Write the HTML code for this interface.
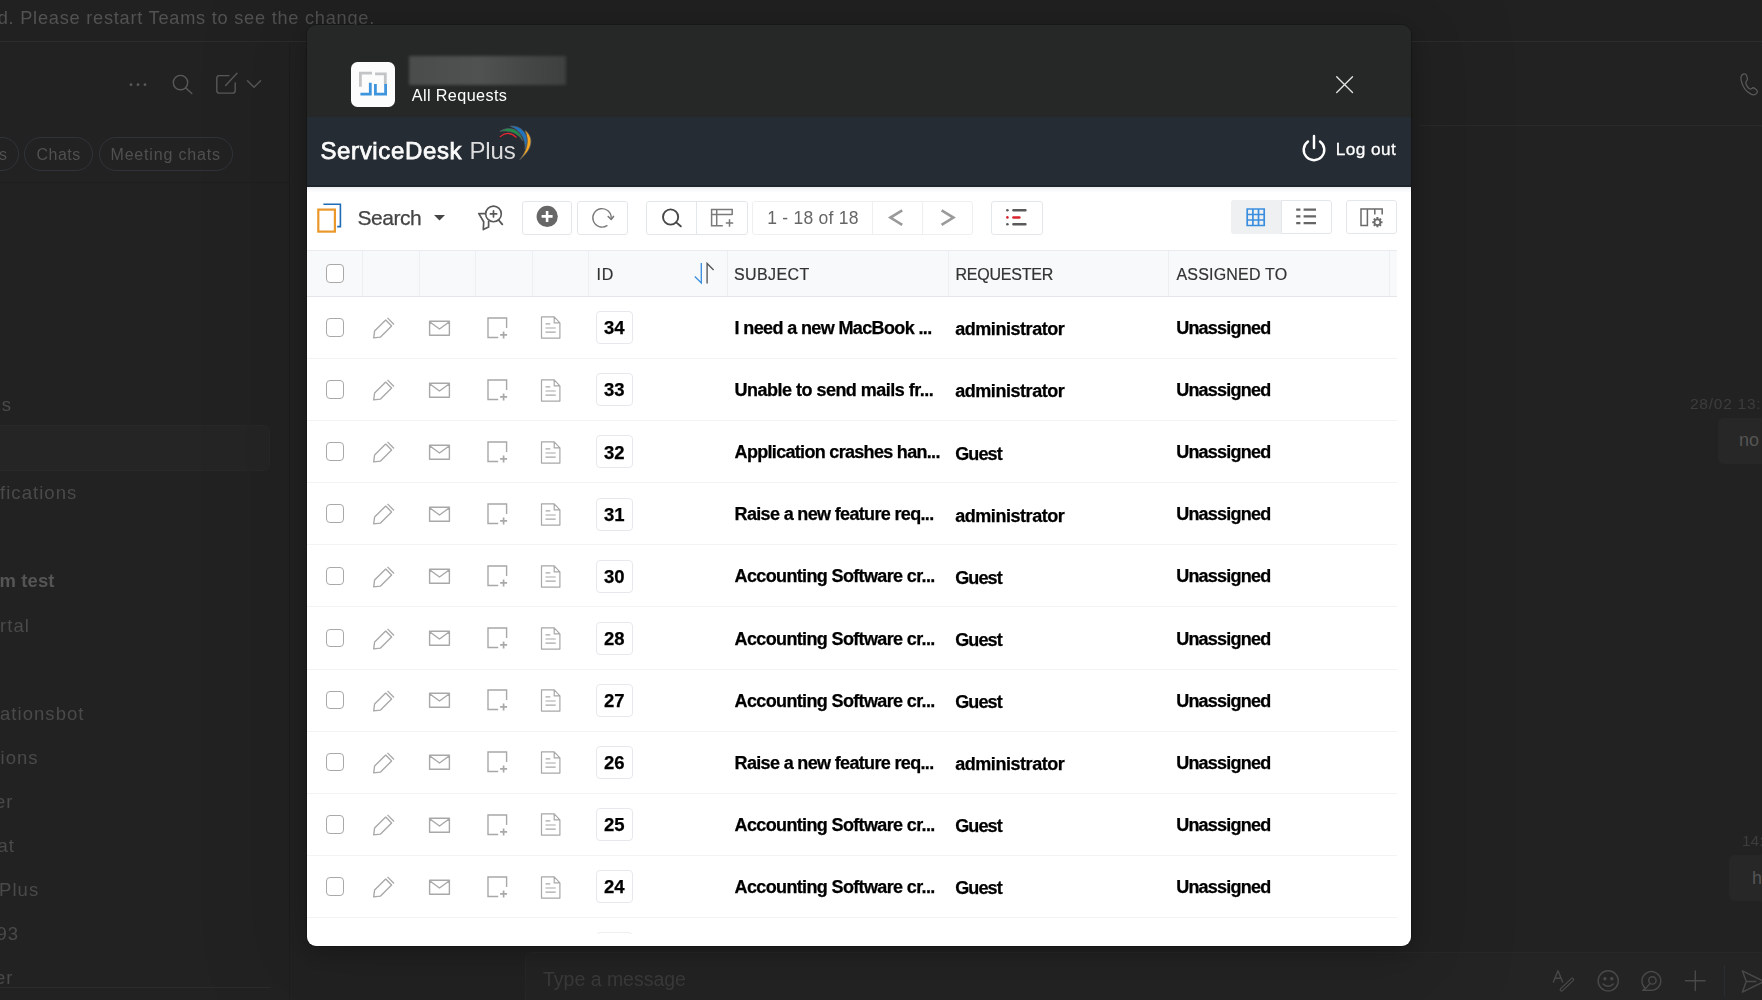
<!DOCTYPE html><html><head><meta charset="utf-8"><title>All Requests</title><style>
*{box-sizing:border-box;margin:0;padding:0}
html,body{width:1762px;height:1000px;overflow:hidden;background:#222;font-family:"Liberation Sans",sans-serif}
body{position:relative}
.t{position:absolute;white-space:nowrap;line-height:1}
.a{position:absolute}
svg{position:absolute;overflow:visible}
.btn{position:absolute;border:1px solid #e4e7ea;border-radius:3px;background:#fff}
.chip{position:absolute;border:1px solid #30343a;border-radius:17px;height:34px;top:137px}
.cb{position:absolute;width:18.4px;height:18.6px;border:1px solid #a9a9a9;border-radius:4px;background:#fff}
.idb{position:absolute;left:596px;width:36.7px;height:33px;border:1px solid #e6e8eb;border-radius:4px}
.sep{position:absolute;left:307px;width:1090px;height:1px;background:#f3f3f3}
.vl{position:absolute;top:251px;height:45px;width:1px;background:#eceef1}
</style></head><body><div id="root" style="position:absolute;left:0;top:0;width:1762px;height:1000px;transform:translateZ(0)">
<div class="a" style="left:0;top:0;width:1762px;height:42px;background:#212121;border-bottom:1px solid #2b2d2e"></div>
<div class="t" style="left:-2.3px;top:9px;font-size:18.2px;color:#525252;letter-spacing:0.76px;">d. Please restart Teams to see the change.</div>
<div class="a" style="left:0;top:126px;width:242px;height:874px;background:#222"></div>
<div class="a" style="left:1420px;top:125px;width:342px;height:1px;background:#2a2a2a"></div>
<div class="a" style="left:0;top:182px;width:289px;height:1px;background:#1e1e1e"></div><div class="a" style="left:289px;top:42px;width:1px;height:958px;background:#1e1e1e"></div>
<svg style="left:0;top:0" width="300" height="120" viewBox="0 0 300 120" fill="none" stroke="#595959" stroke-width="1.4" stroke-linecap="round" stroke-linejoin="round">
<circle cx="131" cy="84.7" r="1.4" fill="#595959" stroke="none"/><circle cx="138" cy="84.7" r="1.4" fill="#595959" stroke="none"/><circle cx="145" cy="84.7" r="1.4" fill="#595959" stroke="none"/>
<circle cx="180.5" cy="82.6" r="7.2"/><path d="M185.8 87.9 L191.8 93.5"/>
<path d="M229 75.6 H219.5 Q216.8 75.6 216.8 78.3 V90.4 Q216.8 93.1 219.5 93.1 H232.5 Q235.2 93.1 235.2 90.4 V83"/><path d="M225.6 85.5 L237 73.3"/>
<path d="M247.5 80.8 L254 87.2 L260.6 80.8"/>
</svg>
<div class="chip" style="left:-30px;width:48.5px"></div>
<div class="chip" style="left:24.3px;width:69px"></div>
<div class="chip" style="left:99px;width:134px"></div>
<div class="t" style="left:-1.0px;top:147px;font-size:16px;color:#505050;">s</div>
<div class="t" style="left:36.5px;top:147px;font-size:16px;color:#505050;letter-spacing:0.50px;">Chats</div>
<div class="t" style="left:110.5px;top:147px;font-size:16px;color:#505050;letter-spacing:0.82px;">Meeting chats</div>
<div class="a" style="left:-10px;top:425px;width:280px;height:46px;background:#252525;border:1px solid #282828;border-radius:6px"></div>
<div class="t" style="left:-9.5px;top:396px;font-size:18.5px;color:#4a4a4a;letter-spacing:1.05px;">ns</div>
<div class="t" style="left:0.0px;top:484px;font-size:18.5px;color:#4a4a4a;letter-spacing:1.05px;">fications</div>
<div class="t" style="left:-0.5px;top:572px;font-size:18.5px;color:#555;font-weight:bold;letter-spacing:0.10px;">m test</div>
<div class="t" style="left:0.0px;top:617px;font-size:18.5px;color:#4a4a4a;letter-spacing:1.05px;">rtal</div>
<div class="t" style="left:0.0px;top:705px;font-size:18.5px;color:#4a4a4a;letter-spacing:1.05px;">ationsbot</div>
<div class="t" style="left:0.5px;top:749px;font-size:18.5px;color:#4a4a4a;letter-spacing:1.05px;">ions</div>
<div class="t" style="left:-5.0px;top:793px;font-size:18.5px;color:#4a4a4a;letter-spacing:1.05px;">er</div>
<div class="t" style="left:-2.5px;top:837px;font-size:18.5px;color:#4a4a4a;letter-spacing:1.05px;">at</div>
<div class="t" style="left:-1.0px;top:881px;font-size:18.5px;color:#4a4a4a;letter-spacing:1.05px;">Plus</div>
<div class="t" style="left:-3.5px;top:925px;font-size:18.5px;color:#4a4a4a;letter-spacing:1.05px;">93</div>
<div class="t" style="left:-5.0px;top:969px;font-size:18.5px;color:#4a4a4a;letter-spacing:1.05px;">er</div>
<div class="a" style="left:0;top:987px;width:270px;height:1px;background:#2c2c2c"></div>
<div class="a" style="left:524.6px;top:952px;width:1300px;height:60px;background:#242424;border:1px solid #282828;border-radius:6px"></div>
<div class="t" style="left:543.0px;top:970px;font-size:19.5px;color:#3c3c3c;letter-spacing:-0.01px;">Type a message</div>
<div class="t" style="left:1690.0px;top:396px;font-size:15.5px;color:#3d3d3d;letter-spacing:0.75px;">28/02 13:05</div>
<div class="a" style="left:1718px;top:418px;width:60px;height:46px;background:#272727;border-radius:6px"></div>
<div class="t" style="left:1739.0px;top:431px;font-size:18px;color:#555;">no</div>
<div class="t" style="left:1742.0px;top:833px;font-size:15.5px;color:#3d3d3d;">14:</div>
<div class="a" style="left:1729px;top:855px;width:60px;height:46px;background:#272727;border-radius:6px"></div>
<div class="t" style="left:1752.0px;top:869px;font-size:18px;color:#555;">hi</div>
<svg style="left:1736px;top:72px" width="26" height="26" viewBox="0 0 27 26" preserveAspectRatio="none" fill="none" stroke="#5a5a5a" stroke-width="1.3" stroke-linejoin="round"><path d="M7.5 2.2 C9.2 1.4 10.5 2 11 3.6 L11.8 6.4 C12.2 7.8 11.6 8.8 10.6 9.6 C9.8 10.2 9.9 11.2 10.6 12.6 C11.6 14.6 12.8 16 14 16.8 C15 17.4 15.8 17 16.4 16.4 C17.4 15.6 18.6 15.6 19.6 16.4 L21.2 17.8 C22.4 18.8 22.4 20.2 21.4 21.4 C20 23 17.8 23.2 15.6 22.2 C10.6 19.8 6.8 14.4 5.4 8.6 C4.8 5.8 5.4 3.2 7.5 2.2 Z"/></svg>
<svg style="left:1540px;top:955px" width="222" height="45" viewBox="1540 955 222 45" fill="none" stroke="#494949" stroke-width="1.4" stroke-linecap="round" stroke-linejoin="round">
<path d="M1553.4 982 L1558 970.8 L1562.6 982 M1554.9 978.3 H1561.1"/>
<path d="M1561.6 989.6 L1572.2 979.6" stroke-width="4"/><path d="M1561.6 989.6 L1572.2 979.6" stroke="#242424" stroke-width="1.5"/>
<circle cx="1608.2" cy="980.8" r="10.1"/><circle cx="1604.9" cy="978.7" r="1" fill="#494949"/><circle cx="1611.8" cy="978.7" r="1" fill="#494949"/><path d="M1603 984 Q1608.2 988.6 1613.4 984"/>
<path d="M1645.6 988.4 A9.4 9.4 0 1 1 1650.2 990.3 L1642.8 990.4 Z"/><circle cx="1652.4" cy="980.4" r="3.7"/><path d="M1650.1 983.4 L1645.6 988.6"/>
<path d="M1695.3 971 V990.6 M1685.5 980.8 H1705.1"/>
<path d="M1724.3 965.5 V996" stroke="#2a3036" stroke-width="1"/>
<path d="M1742.4 970.8 L1764 981.5 L1742.4 992.2 L1746.2 981.5 Z M1746.2 981.5 H1756"/>
</svg>
<div class="a" style="left:307px;top:25px;width:1104px;height:920.6px;border-radius:9px;background:linear-gradient(#262828 0,#262828 92px,#252c34 92px,#252c34 160.2px,#1e242b 160.2px,#1e242b 161.6px,#e6e8ea 161.6px,#f6f7f8 164.5px,#fff 168px);box-shadow:0 0 0 1px rgba(0,0,0,.2),0 6px 22px rgba(0,0,0,.22),0 10px 80px 40px rgba(0,0,0,.09)"></div>
<div class="a" style="left:351px;top:62px;width:44.2px;height:44.6px;border-radius:6.5px;background:#fcfcfc"></div>
<svg style="left:351px;top:62px" width="44" height="44" viewBox="351 62 44 44" fill="none" stroke-width="2.8">
<path d="M372 73.2 H360.4 V86.8" stroke="#c2c4c6"/><path d="M375.1 73.9 H385.3 V84.7" stroke="#c2c4c6"/>
<path d="M370.3 82.7 V94.2 H360.4" stroke="#3f95dd"/><path d="M375.4 84 V94.2 H385.6 V84" stroke="#3f95dd"/>
</svg>
<div class="a" style="left:409px;top:56px;width:157px;height:29px;background:linear-gradient(90deg,#4a4c4b 0%,#505251 45%,#454746 75%,#3e3f3f 100%);filter:blur(1.6px)"></div>
<div class="t" style="left:411.8px;top:87px;font-size:16.2px;color:#fdfdfd;letter-spacing:0.38px;">All Requests</div>
<svg style="left:1336.4px;top:75.8px" width="18" height="18" viewBox="0 0 18 18" stroke="#e2e2e2" stroke-width="1.35" stroke-linecap="round"><path d="M0.7 0.7 L16.5 16.5 M16.5 0.7 L0.7 16.5"/></svg>
<div class="t" style="left:320.4px;top:139px;font-size:24.0px;color:#fbfbfb;letter-spacing:0.65px;-webkit-text-stroke:0.75px #fbfbfb;">ServiceDesk</div>
<div class="t" style="left:469.5px;top:139px;font-size:24.0px;color:#dcdcdc;letter-spacing:-0.16px;">Plus</div>
<svg style="left:494px;top:122px" width="42" height="42" viewBox="494 122 42 42">
<path d="M525 130.6 C533 136 534.5 148 519.6 159.8 C528 150 529 139.5 525 130.6 Z" fill="#f7a621" stroke="#555b63" stroke-width="0.7"/>
<path d="M510.2 126.2 C521 125 531.5 135 525 149 C526 139 519.5 129.5 510.2 126.2 Z" fill="#1f74bd" stroke="#555b63" stroke-width="0.7"/>
<path d="M499.9 131.4 C507 126.3 519.4 127.3 522.6 140.8 C518 132.5 508.5 129.8 499.9 131.4 Z" fill="#1e8f47" stroke="#555b63" stroke-width="0.7"/>
<path d="M500.2 136.6 Q508.4 129.8 516.2 137.2" fill="none" stroke="#e8282f" stroke-width="1.2" stroke-linecap="round"/>
</svg>
<svg style="left:1300px;top:134px" width="28" height="30" viewBox="1300 134 28 30" fill="none" stroke="#fff" stroke-width="2.45" stroke-linecap="round"><path d="M1308 141.5 A10.3 10.3 0 1 0 1320 141.5 M1314 136 V147.9"/></svg>
<div class="t" style="left:1335.7px;top:141px;font-size:17.2px;color:#fff;letter-spacing:0.47px;-webkit-text-stroke:0.3px #fff;">Log out</div>
<svg style="left:314px;top:200px" width="32" height="36" viewBox="314 200 32 36" fill="none">
<path d="M323.4 204.2 H340.4 V226.6 H337.2" stroke="#1f6bb5" stroke-width="1.6"/>
<rect x="318.3" y="209.6" width="16.6" height="22" stroke="#ea982b" stroke-width="2.2"/></svg>
<div class="t" style="left:357.4px;top:207px;font-size:21.0px;color:#444;letter-spacing:-0.45px;-webkit-text-stroke:0.25px #444;">Search</div>
<svg style="left:434.2px;top:214.9px" width="11" height="6" viewBox="0 0 11 6"><path d="M0 0 H11 L5.5 5.6 Z" fill="#454545"/></svg>
<svg style="left:476px;top:203px" width="30" height="30" viewBox="476 203 30 30" fill="none" stroke="#575757" stroke-width="1.7" stroke-linejoin="round" stroke-linecap="round">
<path d="M485.4 213.6 H478.8 L483.7 221.8 L483.3 229.6 L488.6 227.1 V221.6"/>
<circle cx="493.5" cy="213.9" r="7.8" fill="#fff" stroke-width="1.6"/><path d="M498.6 220 L502.3 224.3" stroke-width="1.9"/>
<path d="M490.4 213.9 H496.6 M493.5 210.8 V217" stroke-width="1.7"/></svg>
<div class="btn" style="left:522.2px;top:201px;width:49.799999999999955px;height:33.5px;"></div>
<div class="btn" style="left:577.2px;top:201px;width:50.799999999999955px;height:33.5px;"></div>
<div class="btn" style="left:646.2px;top:201px;width:101.79999999999995px;height:33.5px;"></div>
<div class="a" style="left:696.4px;top:202px;width:1px;height:31.5px;background:#e4e7ea"></div>
<div class="btn" style="left:751.7px;top:201px;width:221.29999999999995px;height:33.5px;border-color:#eeeff1;"></div>
<div class="a" style="left:872.4px;top:202px;width:1px;height:31.5px;background:#eeeff1"></div>
<div class="a" style="left:922.2px;top:202px;width:1px;height:31.5px;background:#eeeff1"></div>
<div class="btn" style="left:991.2px;top:201px;width:51.399999999999864px;height:33.5px;"></div>
<div class="a" style="left:1230.6px;top:200.4px;width:51px;height:33.2px;background:#eef0f2;border-radius:3px 0 0 3px"></div>
<div class="btn" style="left:1281px;top:200.4px;width:51px;height:33.19999999999999px;border-radius:0 3px 3px 0;"></div>
<div class="btn" style="left:1345.8px;top:200.4px;width:51.200000000000045px;height:33.19999999999999px;"></div>
<svg style="left:536px;top:205px" width="23" height="23" viewBox="536 205 23 23"><circle cx="547.2" cy="216.4" r="10.6" fill="#676767"/><path d="M541.6 216.4 H552.6 M547.1 210.9 V221.9" stroke="#fff" stroke-width="2.6"/></svg>
<svg style="left:590px;top:205px" width="26" height="26" viewBox="590 205 26 26" fill="none" stroke="#7a7a7a" stroke-width="1.35" stroke-linecap="round" stroke-linejoin="round"><path d="M607 225.6 A9.2 9.2 0 1 1 611.2 218.5"/><path d="M608.2 216.5 L611.2 219.5 L613.5 216.4" stroke-width="1.6"/></svg>
<svg style="left:660px;top:206px" width="24" height="24" viewBox="660 206 24 24" fill="none" stroke="#474747" stroke-width="1.9" stroke-linecap="round"><circle cx="670.6" cy="217" r="7.6"/><path d="M676.2 222.4 L680.8 226.3"/></svg>
<svg style="left:709px;top:206px" width="26" height="24" viewBox="709 206 26 24" fill="none" stroke="#7a7a7a" stroke-width="1.5"><path d="M722.8 225.8 H711.6 V209.6 H732.2 V215 M711.6 214.4 H732.2 M716.7 209.6 V225.8 M725.8 223 H733.2 M729.5 219.3 V226.7"/></svg>
<div class="t" style="left:767.3px;top:210px;font-size:17.5px;color:#666;letter-spacing:0.24px;">1 - 18 of 18</div>
<svg style="left:886px;top:207px" width="20" height="20" viewBox="886 207 20 20" fill="none" stroke="#9a9a9a" stroke-width="2.6"><path d="M902.2 210.4 L890.4 217.6 L902.2 224.8"/></svg>
<svg style="left:938px;top:207px" width="20" height="20" viewBox="938 207 20 20" fill="none" stroke="#9a9a9a" stroke-width="2.6"><path d="M941.6 210.4 L953.4 217.6 L941.6 224.8"/></svg>
<svg style="left:1004px;top:206px" width="26" height="22" viewBox="1004 206 26 22" fill="none" stroke-width="2.5" stroke-linecap="round">
<path d="M1013.4 210.2 H1025.4 M1013.4 224.2 H1025.4" stroke="#5a5a5a"/><path d="M1013.4 217.4 H1019.4" stroke="#d9232e"/>
<circle cx="1007.4" cy="210.2" r="1.3" fill="#5a5a5a"/><circle cx="1007.4" cy="217.4" r="1.3" fill="#d9232e"/><circle cx="1007.4" cy="224.2" r="1.3" fill="#5a5a5a"/></svg>
<svg style="left:1245px;top:207px" width="22" height="22" viewBox="1245 207 22 22" fill="none" stroke="#3b8ede" stroke-width="1.7"><path d="M1247.2 209 H1264.2 V225.5 H1247.2 Z M1252.9 209 V225.5 M1258.5 209 V225.5 M1247.2 214.5 H1264.2 M1247.2 220 H1264.2"/></svg>
<svg style="left:1295px;top:207px" width="22" height="22" viewBox="1295 207 22 22" fill="none" stroke="#666" stroke-width="2.2"><path d="M1296.2 209.6 H1300.4 M1303.6 209.6 H1316 M1296.2 216.4 H1300.4 M1303.6 216.4 H1316 M1296.2 223.2 H1300.4 M1303.6 223.2 H1316"/></svg>
<svg style="left:1359px;top:206px" width="26" height="24" viewBox="1359 206 26 24" fill="none" stroke="#6a6a6a" stroke-width="1.5">
<path d="M1361 209 H1367.4 V225.4 H1361 Z M1367.4 209 H1382.2 V214.4 M1374.8 209 V214.4"/>
<circle cx="1377.4" cy="222.2" r="2.9" stroke-width="1.7"/><path d="M1377.4 217.1 V218.9 M1377.4 225.5 V227.3 M1372.3 222.2 H1374.1 M1380.7 222.2 H1382.5 M1373.8 218.6 L1375 219.8 M1379.8 224.6 L1381 225.8 M1373.8 225.8 L1375 224.6 M1379.8 219.8 L1381 218.6" stroke-width="2"/></svg>
<div class="a" style="left:307px;top:250px;width:1090px;height:47px;background:#f8f9fa;border-top:1px solid #e9ebee;border-bottom:1px solid #e4e6e9"></div>
<div class="vl" style="left:362.3px"></div>
<div class="vl" style="left:418.8px"></div>
<div class="vl" style="left:475.1px"></div>
<div class="vl" style="left:531.8px"></div>
<div class="vl" style="left:588.4px"></div>
<div class="vl" style="left:727px"></div>
<div class="vl" style="left:947.7px"></div>
<div class="vl" style="left:1168.2px"></div>
<div class="vl" style="left:1389.1px"></div>
<div class="cb" style="left:325.8px;top:264.3px"></div>
<div class="t" style="left:596.6px;top:267px;font-size:16.0px;color:#333;letter-spacing:0.60px;-webkit-text-stroke:0.2px #333;">ID</div>
<div class="t" style="left:734.0px;top:267px;font-size:16.0px;color:#333;letter-spacing:0.38px;-webkit-text-stroke:0.2px #333;">SUBJECT</div>
<div class="t" style="left:955.4px;top:267px;font-size:16.0px;color:#333;letter-spacing:-0.20px;-webkit-text-stroke:0.2px #333;">REQUESTER</div>
<div class="t" style="left:1176.4px;top:267px;font-size:16.0px;color:#333;letter-spacing:0.20px;-webkit-text-stroke:0.2px #333;">ASSIGNED TO</div>
<svg style="left:692px;top:261px" width="24" height="24" viewBox="692 261 24 24" fill="none" stroke-width="1.35"><path d="M701.3 263.1 V282.9 L694.8 276.4" stroke="#3b8ede"/><path d="M707.1 283.6 V263.4 L713.6 269.9" stroke="#555"/></svg>
<div class="cb" style="left:325.8px;top:318.1px"></div>
<svg style="left:372px;top:316.0px" width="24" height="24"><path d="M1.7 21.9 L2.6 15 L13.7 4.1 L19.6 10 L8.3 21.2 Z M15.5 1.9 L22 8.5" fill="none" stroke="#a8a8a8" stroke-width="1.35" stroke-linejoin="round"/></svg>
<svg style="left:428px;top:319.5px" width="24" height="18"><path d="M1.6 1.3 H21.4 V15.2 H1.6 Z M1.6 1.8 L11.5 9 L21.4 1.8" fill="none" stroke="#a8a8a8" stroke-width="1.4" stroke-linejoin="round"/></svg>
<svg style="left:486.5px;top:316.5px" width="22" height="24"><path d="M11.2 20.5 H1 V1 H19.6 V11" fill="none" stroke="#a8a8a8" stroke-width="1.4"/><path d="M13.1 17.9 H20.1 M16.6 14.4 V21.4" fill="none" stroke="#a8a8a8" stroke-width="1.7"/></svg>
<svg style="left:540.4px;top:316.4px" width="22" height="24"><path d="M1.5 0.9 H14.2 L19.9 6.9 V22.1 H1.5 Z M14.2 0.9 V6.9 H19.9 M5.5 7.8 H10.3 M5.5 12 H15.7 M5.5 16.1 H15.7" fill="none" stroke="#a8a8a8" stroke-width="1.2" stroke-linejoin="round"/></svg>
<div class="idb" style="top:311.2px"></div>
<div class="t" style="left:603.9px;top:319px;font-size:18.5px;color:#000;font-weight:bold;letter-spacing:0.02px;-webkit-text-stroke:0.25px #000;">34</div>
<div class="t" style="left:734.6px;top:319px;font-size:18.0px;color:#000;font-weight:bold;letter-spacing:-0.63px;-webkit-text-stroke:0.25px #000;">I need a new MacBook ...</div>
<div class="t" style="left:955.2px;top:320px;font-size:18.0px;color:#000;font-weight:bold;letter-spacing:-0.45px;-webkit-text-stroke:0.25px #000;">administrator</div>
<div class="t" style="left:1176.2px;top:319px;font-size:18.0px;color:#000;font-weight:bold;letter-spacing:-0.78px;-webkit-text-stroke:0.25px #000;">Unassigned</div>
<div class="sep" style="top:357.97px"></div>
<div class="cb" style="left:325.8px;top:380.2px"></div>
<svg style="left:372px;top:378.1px" width="24" height="24"><path d="M1.7 21.9 L2.6 15 L13.7 4.1 L19.6 10 L8.3 21.2 Z M15.5 1.9 L22 8.5" fill="none" stroke="#a8a8a8" stroke-width="1.35" stroke-linejoin="round"/></svg>
<svg style="left:428px;top:381.6px" width="24" height="18"><path d="M1.6 1.3 H21.4 V15.2 H1.6 Z M1.6 1.8 L11.5 9 L21.4 1.8" fill="none" stroke="#a8a8a8" stroke-width="1.4" stroke-linejoin="round"/></svg>
<svg style="left:486.5px;top:378.6px" width="22" height="24"><path d="M11.2 20.5 H1 V1 H19.6 V11" fill="none" stroke="#a8a8a8" stroke-width="1.4"/><path d="M13.1 17.9 H20.1 M16.6 14.4 V21.4" fill="none" stroke="#a8a8a8" stroke-width="1.7"/></svg>
<svg style="left:540.4px;top:378.5px" width="22" height="24"><path d="M1.5 0.9 H14.2 L19.9 6.9 V22.1 H1.5 Z M14.2 0.9 V6.9 H19.9 M5.5 7.8 H10.3 M5.5 12 H15.7 M5.5 16.1 H15.7" fill="none" stroke="#a8a8a8" stroke-width="1.2" stroke-linejoin="round"/></svg>
<div class="idb" style="top:373.3px"></div>
<div class="t" style="left:603.9px;top:381px;font-size:18.5px;color:#000;font-weight:bold;letter-spacing:0.02px;-webkit-text-stroke:0.25px #000;">33</div>
<div class="t" style="left:734.6px;top:381px;font-size:18.0px;color:#000;font-weight:bold;letter-spacing:-0.52px;-webkit-text-stroke:0.25px #000;">Unable to send mails fr...</div>
<div class="t" style="left:955.2px;top:382px;font-size:18.0px;color:#000;font-weight:bold;letter-spacing:-0.45px;-webkit-text-stroke:0.25px #000;">administrator</div>
<div class="t" style="left:1176.2px;top:381px;font-size:18.0px;color:#000;font-weight:bold;letter-spacing:-0.78px;-webkit-text-stroke:0.25px #000;">Unassigned</div>
<div class="sep" style="top:420.09px"></div>
<div class="cb" style="left:325.8px;top:442.3px"></div>
<svg style="left:372px;top:440.2px" width="24" height="24"><path d="M1.7 21.9 L2.6 15 L13.7 4.1 L19.6 10 L8.3 21.2 Z M15.5 1.9 L22 8.5" fill="none" stroke="#a8a8a8" stroke-width="1.35" stroke-linejoin="round"/></svg>
<svg style="left:428px;top:443.7px" width="24" height="18"><path d="M1.6 1.3 H21.4 V15.2 H1.6 Z M1.6 1.8 L11.5 9 L21.4 1.8" fill="none" stroke="#a8a8a8" stroke-width="1.4" stroke-linejoin="round"/></svg>
<svg style="left:486.5px;top:440.7px" width="22" height="24"><path d="M11.2 20.5 H1 V1 H19.6 V11" fill="none" stroke="#a8a8a8" stroke-width="1.4"/><path d="M13.1 17.9 H20.1 M16.6 14.4 V21.4" fill="none" stroke="#a8a8a8" stroke-width="1.7"/></svg>
<svg style="left:540.4px;top:440.6px" width="22" height="24"><path d="M1.5 0.9 H14.2 L19.9 6.9 V22.1 H1.5 Z M14.2 0.9 V6.9 H19.9 M5.5 7.8 H10.3 M5.5 12 H15.7 M5.5 16.1 H15.7" fill="none" stroke="#a8a8a8" stroke-width="1.2" stroke-linejoin="round"/></svg>
<div class="idb" style="top:435.4px"></div>
<div class="t" style="left:603.9px;top:444px;font-size:18.5px;color:#000;font-weight:bold;letter-spacing:0.02px;-webkit-text-stroke:0.25px #000;">32</div>
<div class="t" style="left:734.6px;top:443px;font-size:18.0px;color:#000;font-weight:bold;letter-spacing:-0.69px;-webkit-text-stroke:0.25px #000;">Application crashes han...</div>
<div class="t" style="left:955.2px;top:445px;font-size:18.0px;color:#000;font-weight:bold;letter-spacing:-0.88px;-webkit-text-stroke:0.25px #000;">Guest</div>
<div class="t" style="left:1176.2px;top:443px;font-size:18.0px;color:#000;font-weight:bold;letter-spacing:-0.78px;-webkit-text-stroke:0.25px #000;">Unassigned</div>
<div class="sep" style="top:482.21px"></div>
<div class="cb" style="left:325.8px;top:504.4px"></div>
<svg style="left:372px;top:502.4px" width="24" height="24"><path d="M1.7 21.9 L2.6 15 L13.7 4.1 L19.6 10 L8.3 21.2 Z M15.5 1.9 L22 8.5" fill="none" stroke="#a8a8a8" stroke-width="1.35" stroke-linejoin="round"/></svg>
<svg style="left:428px;top:505.9px" width="24" height="18"><path d="M1.6 1.3 H21.4 V15.2 H1.6 Z M1.6 1.8 L11.5 9 L21.4 1.8" fill="none" stroke="#a8a8a8" stroke-width="1.4" stroke-linejoin="round"/></svg>
<svg style="left:486.5px;top:502.9px" width="22" height="24"><path d="M11.2 20.5 H1 V1 H19.6 V11" fill="none" stroke="#a8a8a8" stroke-width="1.4"/><path d="M13.1 17.9 H20.1 M16.6 14.4 V21.4" fill="none" stroke="#a8a8a8" stroke-width="1.7"/></svg>
<svg style="left:540.4px;top:502.8px" width="22" height="24"><path d="M1.5 0.9 H14.2 L19.9 6.9 V22.1 H1.5 Z M14.2 0.9 V6.9 H19.9 M5.5 7.8 H10.3 M5.5 12 H15.7 M5.5 16.1 H15.7" fill="none" stroke="#a8a8a8" stroke-width="1.2" stroke-linejoin="round"/></svg>
<div class="idb" style="top:497.6px"></div>
<div class="t" style="left:603.9px;top:506px;font-size:18.5px;color:#000;font-weight:bold;letter-spacing:0.02px;-webkit-text-stroke:0.25px #000;">31</div>
<div class="t" style="left:734.6px;top:505px;font-size:18.0px;color:#000;font-weight:bold;letter-spacing:-0.66px;-webkit-text-stroke:0.25px #000;">Raise a new feature req...</div>
<div class="t" style="left:955.2px;top:507px;font-size:18.0px;color:#000;font-weight:bold;letter-spacing:-0.45px;-webkit-text-stroke:0.25px #000;">administrator</div>
<div class="t" style="left:1176.2px;top:505px;font-size:18.0px;color:#000;font-weight:bold;letter-spacing:-0.78px;-webkit-text-stroke:0.25px #000;">Unassigned</div>
<div class="sep" style="top:544.33px"></div>
<div class="cb" style="left:325.8px;top:566.5px"></div>
<svg style="left:372px;top:564.5px" width="24" height="24"><path d="M1.7 21.9 L2.6 15 L13.7 4.1 L19.6 10 L8.3 21.2 Z M15.5 1.9 L22 8.5" fill="none" stroke="#a8a8a8" stroke-width="1.35" stroke-linejoin="round"/></svg>
<svg style="left:428px;top:568.0px" width="24" height="18"><path d="M1.6 1.3 H21.4 V15.2 H1.6 Z M1.6 1.8 L11.5 9 L21.4 1.8" fill="none" stroke="#a8a8a8" stroke-width="1.4" stroke-linejoin="round"/></svg>
<svg style="left:486.5px;top:565.0px" width="22" height="24"><path d="M11.2 20.5 H1 V1 H19.6 V11" fill="none" stroke="#a8a8a8" stroke-width="1.4"/><path d="M13.1 17.9 H20.1 M16.6 14.4 V21.4" fill="none" stroke="#a8a8a8" stroke-width="1.7"/></svg>
<svg style="left:540.4px;top:564.9px" width="22" height="24"><path d="M1.5 0.9 H14.2 L19.9 6.9 V22.1 H1.5 Z M14.2 0.9 V6.9 H19.9 M5.5 7.8 H10.3 M5.5 12 H15.7 M5.5 16.1 H15.7" fill="none" stroke="#a8a8a8" stroke-width="1.2" stroke-linejoin="round"/></svg>
<div class="idb" style="top:559.7px"></div>
<div class="t" style="left:603.9px;top:568px;font-size:18.5px;color:#000;font-weight:bold;letter-spacing:0.02px;-webkit-text-stroke:0.25px #000;">30</div>
<div class="t" style="left:734.6px;top:567px;font-size:18.0px;color:#000;font-weight:bold;letter-spacing:-0.64px;-webkit-text-stroke:0.25px #000;">Accounting Software cr...</div>
<div class="t" style="left:955.2px;top:569px;font-size:18.0px;color:#000;font-weight:bold;letter-spacing:-0.88px;-webkit-text-stroke:0.25px #000;">Guest</div>
<div class="t" style="left:1176.2px;top:567px;font-size:18.0px;color:#000;font-weight:bold;letter-spacing:-0.78px;-webkit-text-stroke:0.25px #000;">Unassigned</div>
<div class="sep" style="top:606.45px"></div>
<div class="cb" style="left:325.8px;top:628.7px"></div>
<svg style="left:372px;top:626.6px" width="24" height="24"><path d="M1.7 21.9 L2.6 15 L13.7 4.1 L19.6 10 L8.3 21.2 Z M15.5 1.9 L22 8.5" fill="none" stroke="#a8a8a8" stroke-width="1.35" stroke-linejoin="round"/></svg>
<svg style="left:428px;top:630.1px" width="24" height="18"><path d="M1.6 1.3 H21.4 V15.2 H1.6 Z M1.6 1.8 L11.5 9 L21.4 1.8" fill="none" stroke="#a8a8a8" stroke-width="1.4" stroke-linejoin="round"/></svg>
<svg style="left:486.5px;top:627.1px" width="22" height="24"><path d="M11.2 20.5 H1 V1 H19.6 V11" fill="none" stroke="#a8a8a8" stroke-width="1.4"/><path d="M13.1 17.9 H20.1 M16.6 14.4 V21.4" fill="none" stroke="#a8a8a8" stroke-width="1.7"/></svg>
<svg style="left:540.4px;top:627.0px" width="22" height="24"><path d="M1.5 0.9 H14.2 L19.9 6.9 V22.1 H1.5 Z M14.2 0.9 V6.9 H19.9 M5.5 7.8 H10.3 M5.5 12 H15.7 M5.5 16.1 H15.7" fill="none" stroke="#a8a8a8" stroke-width="1.2" stroke-linejoin="round"/></svg>
<div class="idb" style="top:621.8px"></div>
<div class="t" style="left:603.9px;top:630px;font-size:18.5px;color:#000;font-weight:bold;letter-spacing:0.02px;-webkit-text-stroke:0.25px #000;">28</div>
<div class="t" style="left:734.6px;top:630px;font-size:18.0px;color:#000;font-weight:bold;letter-spacing:-0.64px;-webkit-text-stroke:0.25px #000;">Accounting Software cr...</div>
<div class="t" style="left:955.2px;top:631px;font-size:18.0px;color:#000;font-weight:bold;letter-spacing:-0.88px;-webkit-text-stroke:0.25px #000;">Guest</div>
<div class="t" style="left:1176.2px;top:630px;font-size:18.0px;color:#000;font-weight:bold;letter-spacing:-0.78px;-webkit-text-stroke:0.25px #000;">Unassigned</div>
<div class="sep" style="top:668.57px"></div>
<div class="cb" style="left:325.8px;top:690.8px"></div>
<svg style="left:372px;top:688.7px" width="24" height="24"><path d="M1.7 21.9 L2.6 15 L13.7 4.1 L19.6 10 L8.3 21.2 Z M15.5 1.9 L22 8.5" fill="none" stroke="#a8a8a8" stroke-width="1.35" stroke-linejoin="round"/></svg>
<svg style="left:428px;top:692.2px" width="24" height="18"><path d="M1.6 1.3 H21.4 V15.2 H1.6 Z M1.6 1.8 L11.5 9 L21.4 1.8" fill="none" stroke="#a8a8a8" stroke-width="1.4" stroke-linejoin="round"/></svg>
<svg style="left:486.5px;top:689.2px" width="22" height="24"><path d="M11.2 20.5 H1 V1 H19.6 V11" fill="none" stroke="#a8a8a8" stroke-width="1.4"/><path d="M13.1 17.9 H20.1 M16.6 14.4 V21.4" fill="none" stroke="#a8a8a8" stroke-width="1.7"/></svg>
<svg style="left:540.4px;top:689.1px" width="22" height="24"><path d="M1.5 0.9 H14.2 L19.9 6.9 V22.1 H1.5 Z M14.2 0.9 V6.9 H19.9 M5.5 7.8 H10.3 M5.5 12 H15.7 M5.5 16.1 H15.7" fill="none" stroke="#a8a8a8" stroke-width="1.2" stroke-linejoin="round"/></svg>
<div class="idb" style="top:683.9px"></div>
<div class="t" style="left:603.9px;top:692px;font-size:18.5px;color:#000;font-weight:bold;letter-spacing:0.02px;-webkit-text-stroke:0.25px #000;">27</div>
<div class="t" style="left:734.6px;top:692px;font-size:18.0px;color:#000;font-weight:bold;letter-spacing:-0.64px;-webkit-text-stroke:0.25px #000;">Accounting Software cr...</div>
<div class="t" style="left:955.2px;top:693px;font-size:18.0px;color:#000;font-weight:bold;letter-spacing:-0.88px;-webkit-text-stroke:0.25px #000;">Guest</div>
<div class="t" style="left:1176.2px;top:692px;font-size:18.0px;color:#000;font-weight:bold;letter-spacing:-0.78px;-webkit-text-stroke:0.25px #000;">Unassigned</div>
<div class="sep" style="top:730.69px"></div>
<div class="cb" style="left:325.8px;top:752.9px"></div>
<svg style="left:372px;top:750.8px" width="24" height="24"><path d="M1.7 21.9 L2.6 15 L13.7 4.1 L19.6 10 L8.3 21.2 Z M15.5 1.9 L22 8.5" fill="none" stroke="#a8a8a8" stroke-width="1.35" stroke-linejoin="round"/></svg>
<svg style="left:428px;top:754.3px" width="24" height="18"><path d="M1.6 1.3 H21.4 V15.2 H1.6 Z M1.6 1.8 L11.5 9 L21.4 1.8" fill="none" stroke="#a8a8a8" stroke-width="1.4" stroke-linejoin="round"/></svg>
<svg style="left:486.5px;top:751.3px" width="22" height="24"><path d="M11.2 20.5 H1 V1 H19.6 V11" fill="none" stroke="#a8a8a8" stroke-width="1.4"/><path d="M13.1 17.9 H20.1 M16.6 14.4 V21.4" fill="none" stroke="#a8a8a8" stroke-width="1.7"/></svg>
<svg style="left:540.4px;top:751.2px" width="22" height="24"><path d="M1.5 0.9 H14.2 L19.9 6.9 V22.1 H1.5 Z M14.2 0.9 V6.9 H19.9 M5.5 7.8 H10.3 M5.5 12 H15.7 M5.5 16.1 H15.7" fill="none" stroke="#a8a8a8" stroke-width="1.2" stroke-linejoin="round"/></svg>
<div class="idb" style="top:746.0px"></div>
<div class="t" style="left:603.9px;top:754px;font-size:18.5px;color:#000;font-weight:bold;letter-spacing:0.02px;-webkit-text-stroke:0.25px #000;">26</div>
<div class="t" style="left:734.6px;top:754px;font-size:18.0px;color:#000;font-weight:bold;letter-spacing:-0.66px;-webkit-text-stroke:0.25px #000;">Raise a new feature req...</div>
<div class="t" style="left:955.2px;top:755px;font-size:18.0px;color:#000;font-weight:bold;letter-spacing:-0.45px;-webkit-text-stroke:0.25px #000;">administrator</div>
<div class="t" style="left:1176.2px;top:754px;font-size:18.0px;color:#000;font-weight:bold;letter-spacing:-0.78px;-webkit-text-stroke:0.25px #000;">Unassigned</div>
<div class="sep" style="top:792.81px"></div>
<div class="cb" style="left:325.8px;top:815.0px"></div>
<svg style="left:372px;top:813.0px" width="24" height="24"><path d="M1.7 21.9 L2.6 15 L13.7 4.1 L19.6 10 L8.3 21.2 Z M15.5 1.9 L22 8.5" fill="none" stroke="#a8a8a8" stroke-width="1.35" stroke-linejoin="round"/></svg>
<svg style="left:428px;top:816.5px" width="24" height="18"><path d="M1.6 1.3 H21.4 V15.2 H1.6 Z M1.6 1.8 L11.5 9 L21.4 1.8" fill="none" stroke="#a8a8a8" stroke-width="1.4" stroke-linejoin="round"/></svg>
<svg style="left:486.5px;top:813.5px" width="22" height="24"><path d="M11.2 20.5 H1 V1 H19.6 V11" fill="none" stroke="#a8a8a8" stroke-width="1.4"/><path d="M13.1 17.9 H20.1 M16.6 14.4 V21.4" fill="none" stroke="#a8a8a8" stroke-width="1.7"/></svg>
<svg style="left:540.4px;top:813.4px" width="22" height="24"><path d="M1.5 0.9 H14.2 L19.9 6.9 V22.1 H1.5 Z M14.2 0.9 V6.9 H19.9 M5.5 7.8 H10.3 M5.5 12 H15.7 M5.5 16.1 H15.7" fill="none" stroke="#a8a8a8" stroke-width="1.2" stroke-linejoin="round"/></svg>
<div class="idb" style="top:808.2px"></div>
<div class="t" style="left:603.9px;top:816px;font-size:18.5px;color:#000;font-weight:bold;letter-spacing:0.02px;-webkit-text-stroke:0.25px #000;">25</div>
<div class="t" style="left:734.6px;top:816px;font-size:18.0px;color:#000;font-weight:bold;letter-spacing:-0.64px;-webkit-text-stroke:0.25px #000;">Accounting Software cr...</div>
<div class="t" style="left:955.2px;top:817px;font-size:18.0px;color:#000;font-weight:bold;letter-spacing:-0.88px;-webkit-text-stroke:0.25px #000;">Guest</div>
<div class="t" style="left:1176.2px;top:816px;font-size:18.0px;color:#000;font-weight:bold;letter-spacing:-0.78px;-webkit-text-stroke:0.25px #000;">Unassigned</div>
<div class="sep" style="top:854.93px"></div>
<div class="cb" style="left:325.8px;top:877.1px"></div>
<svg style="left:372px;top:875.1px" width="24" height="24"><path d="M1.7 21.9 L2.6 15 L13.7 4.1 L19.6 10 L8.3 21.2 Z M15.5 1.9 L22 8.5" fill="none" stroke="#a8a8a8" stroke-width="1.35" stroke-linejoin="round"/></svg>
<svg style="left:428px;top:878.6px" width="24" height="18"><path d="M1.6 1.3 H21.4 V15.2 H1.6 Z M1.6 1.8 L11.5 9 L21.4 1.8" fill="none" stroke="#a8a8a8" stroke-width="1.4" stroke-linejoin="round"/></svg>
<svg style="left:486.5px;top:875.6px" width="22" height="24"><path d="M11.2 20.5 H1 V1 H19.6 V11" fill="none" stroke="#a8a8a8" stroke-width="1.4"/><path d="M13.1 17.9 H20.1 M16.6 14.4 V21.4" fill="none" stroke="#a8a8a8" stroke-width="1.7"/></svg>
<svg style="left:540.4px;top:875.5px" width="22" height="24"><path d="M1.5 0.9 H14.2 L19.9 6.9 V22.1 H1.5 Z M14.2 0.9 V6.9 H19.9 M5.5 7.8 H10.3 M5.5 12 H15.7 M5.5 16.1 H15.7" fill="none" stroke="#a8a8a8" stroke-width="1.2" stroke-linejoin="round"/></svg>
<div class="idb" style="top:870.3px"></div>
<div class="t" style="left:603.9px;top:878px;font-size:18.5px;color:#000;font-weight:bold;letter-spacing:0.02px;-webkit-text-stroke:0.25px #000;">24</div>
<div class="t" style="left:734.6px;top:878px;font-size:18.0px;color:#000;font-weight:bold;letter-spacing:-0.64px;-webkit-text-stroke:0.25px #000;">Accounting Software cr...</div>
<div class="t" style="left:955.2px;top:879px;font-size:18.0px;color:#000;font-weight:bold;letter-spacing:-0.88px;-webkit-text-stroke:0.25px #000;">Guest</div>
<div class="t" style="left:1176.2px;top:878px;font-size:18.0px;color:#000;font-weight:bold;letter-spacing:-0.78px;-webkit-text-stroke:0.25px #000;">Unassigned</div>
<div class="sep" style="top:917.05px"></div>
<div class="a" style="left:596px;top:932.4px;width:36.7px;height:20px;border:1px solid #e6e8eb;border-radius:4px 4px 0 0;clip-path:inset(0 1.5px 18.4px 1.5px);border-color:#e0e2e5"></div>
</div></body></html>
